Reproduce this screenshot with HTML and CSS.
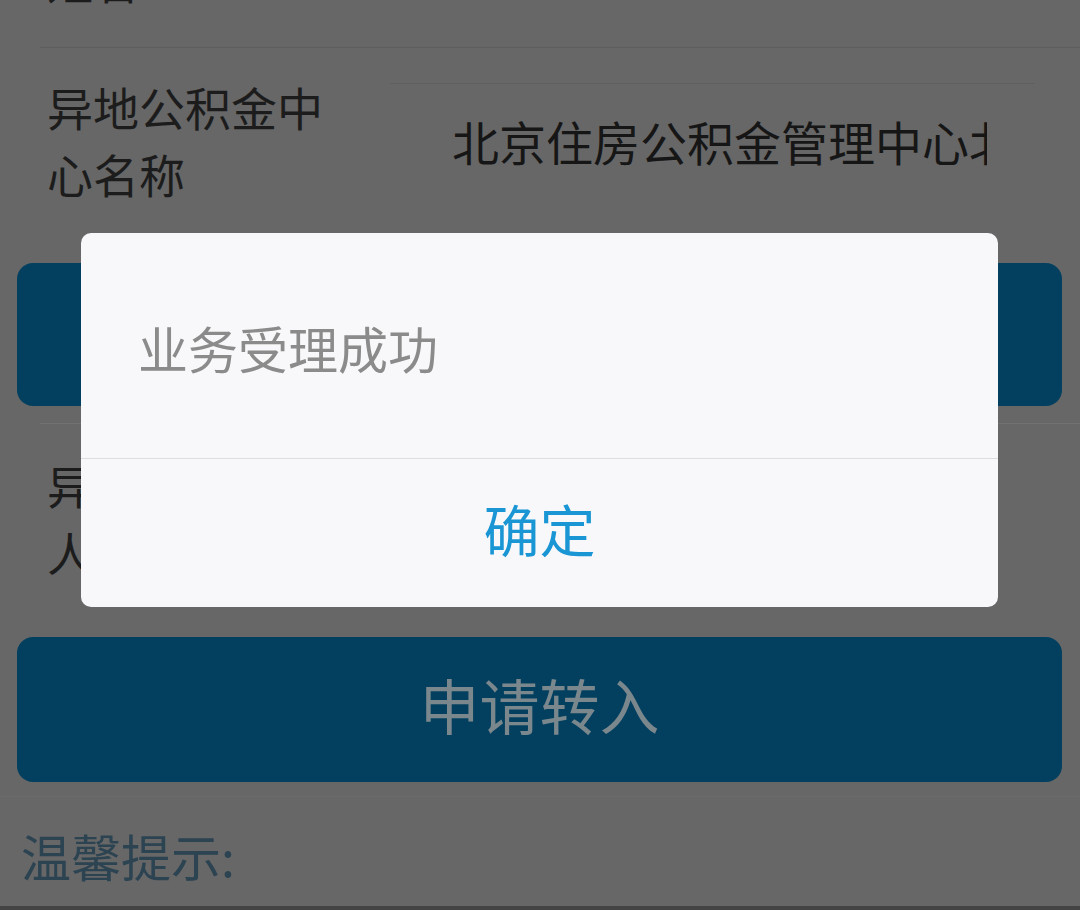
FILE: index.html
```html
<!DOCTYPE html>
<html lang="zh-CN">
<head>
<meta charset="utf-8">
<title>申请转入</title>
<link rel="stylesheet" href="styles.css">
</head>
<body>
<div class="screen">
  <div class="content">
    <div class="row row-top">
      <div class="label">姓名</div>
    </div>
    <div class="row row-center">
      <div class="label">异地公积金中心名称</div>
      <div class="field"><div class="field-value">北京住房公积金管理中心北京分中心</div></div>
    </div>
    <button class="btn btn-query">查询</button>
    <div class="row row-contact">
      <div class="label">异地单位联系人</div>
    </div>
    <button class="btn btn-apply">申请转入</button>
    <div class="tips">温馨提示:</div>
  </div>
  <div class="nav-strip"></div>

  <div class="dialog">
    <div class="dialog-msg">业务受理成功</div>
    <div class="dialog-actions"><button class="dialog-ok">确定</button></div>
  </div>
</div>
</body>
</html>
```

FILE: styles.css
```css
html, body {
  margin: 0;
  padding: 0;
}

body {
  width: 1080px;
  height: 910px;
  overflow: hidden;
  background: #676767;
  font-family: "Noto Sans CJK SC", "Noto Sans", sans-serif;
  color: #1c1c1c;
}

.screen {
  position: relative;
  height: 910px;
  display: flex;
  flex-direction: column;
}

.content {
  flex: 1;
  overflow: hidden;
  display: flex;
  flex-direction: column;
}

.row {
  display: flex;
  margin-left: 40px;
  padding-left: 7px;
}

.label {
  width: 280px;
  font-size: 46px;
  line-height: 67px;
  color: #1c1c1c;
}

.row-top {
  margin-top: -79px;
  padding-top: 25px;
  padding-bottom: 34px;
  border-bottom: 1px solid #5e5e5e;
}

.row-center {
  padding-top: 25px;
  padding-bottom: 25px;
  align-items: flex-start;
}

.field {
  margin-top: 10px;
  margin-left: 63px;
  width: 645px;
  border-top: 1px solid #5f5f5f;
  padding: 23px 48px 0 62px;
  box-sizing: border-box;
  overflow: hidden;
}

.field-value {
  font-size: 47px;
  line-height: 67px;
  white-space: nowrap;
  overflow: hidden;
  color: #161616;
}

.btn {
  display: block;
  margin-left: 17px;
  width: 1045px;
  border: none;
  border-radius: 16px;
  background: #03405f;
  font-family: inherit;
  color: #7a878d;
  padding: 0;
}

.btn-query {
  margin-top: 31px;
  height: 143px;
  font-size: 60px;
}

.row-contact {
  margin-top: 17px;
  border-top: 1px solid #717171;
  padding-top: 27px;
  padding-bottom: 26px;
}

.btn-apply {
  margin-top: 26px;
  height: 145px;
  font-size: 60px;
  line-height: 80px;
  padding-bottom: 12px;
}

.tips {
  margin-top: 14px;
  border-top: 1px solid #6c6c6c;
  padding: 23px 0 0 21px;
  font-size: 50px;
  line-height: 70px;
  color: #2c4352;
}

.nav-strip {
  height: 4px;
  background: #444444;
}

.dialog {
  position: absolute;
  left: 81px;
  top: 233px;
  width: 917px;
  height: 374px;
  background: #f8f8fa;
  border-radius: 10px;
  display: flex;
  flex-direction: column;
  overflow: hidden;
}

.dialog-msg {
  height: 226px;
  box-sizing: border-box;
  display: flex;
  align-items: center;
  padding: 2px 0 0 57px;
  font-size: 50px;
  line-height: 70px;
  color: #8b8b8b;
  border-bottom: 1px solid #dedee1;
}

.dialog-actions {
  flex: 1;
  display: flex;
}

.dialog-ok {
  flex: 1;
  border: none;
  background: transparent;
  font-family: inherit;
  font-size: 56px;
  line-height: 70px;
  color: #1b96d5;
  padding: 0 0 10px 0;
}
```
